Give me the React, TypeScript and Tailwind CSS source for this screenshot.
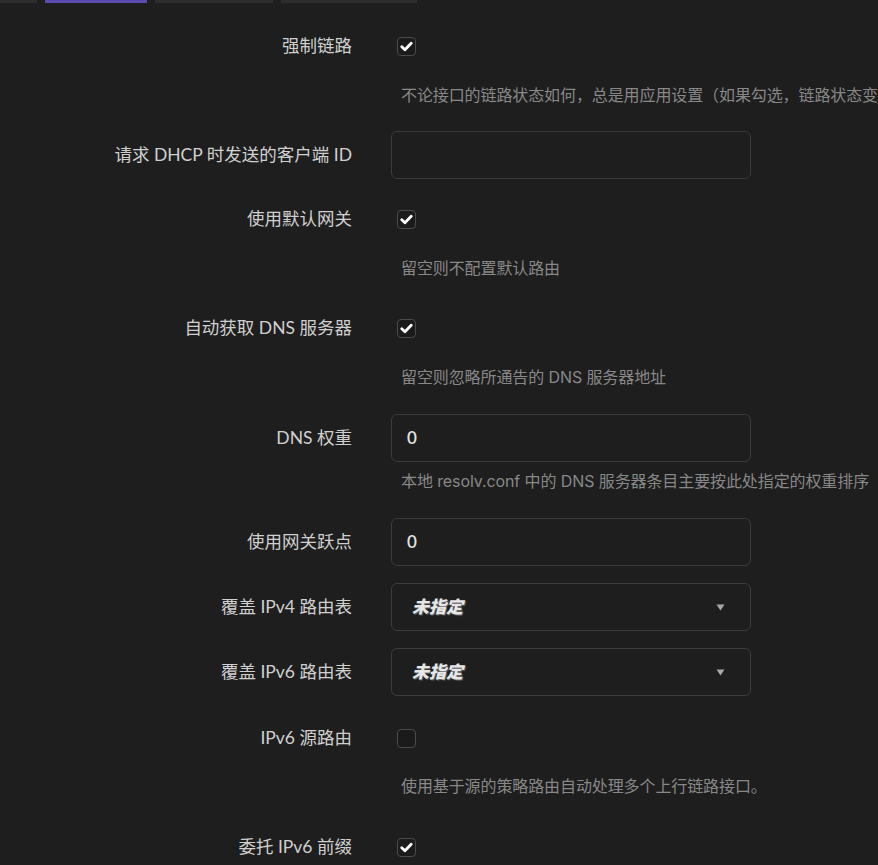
import React from "react";

const FONT = { fontFamily: '"Lato", "Noto Sans CJK SC", "Noto Sans", sans-serif' };
const DESC_FONT = { fontFamily: '"Inter", "Noto Sans CJK SC", "Noto Sans", sans-serif' };

function Check({ checked }: { checked: boolean }) {
  return (
    <div className="ml-[6px] flex h-[19px] w-[19px] items-center justify-center rounded-[4px] border border-[#4a4a4a] bg-[#1b1b1b]">
      {checked && (
        <svg width="13" height="11" viewBox="0 0 13 11">
          <path d="M1.8 5.8 L4.9 8.8 L11.2 2.2" fill="none" stroke="#ffffff" strokeWidth="2.8" strokeLinecap="round" strokeLinejoin="round" />
        </svg>
      )}
    </div>
  );
}

function Label({ children }: { children: React.ReactNode }) {
  return (
    <div className="w-[352px] shrink-0 text-right text-[17.5px] leading-[24px] text-[#d0d0d0] whitespace-nowrap">
      {children}
    </div>
  );
}

function Row({
  label,
  children,
  className,
}: {
  label: string;
  children: React.ReactNode;
  className?: string;
}) {
  return (
    <div className={"flex h-[48px] items-center " + (className ?? "")}>
      <Label>{label}</Label>
      <div className="ml-[39px] flex items-center">{children}</div>
    </div>
  );
}

function Desc({ children, className }: { children: React.ReactNode; className?: string }) {
  return (
    <div
      className={"overflow-hidden pl-[401px] text-[16px] leading-[20px] tracking-[-0.1px] text-[#888888] whitespace-nowrap " + (className ?? "")}
      style={DESC_FONT}
    >
      {children}
    </div>
  );
}

function TextInput({ value }: { value: string }) {
  return (
    <div className="flex h-[48px] w-[360px] items-center rounded-[6px] border border-[#3b3b3b] bg-[#1e1e1e] pl-[15px] text-[17px] font-semibold text-[#e4e4e4]">
      {value}
    </div>
  );
}

function SelectBox() {
  return (
    <div className="flex h-[48px] w-[360px] items-center justify-between rounded-[6px] border border-[#3b3b3b] bg-[#1e1e1e] pl-[20px] pr-[25px]">
      <span
        className="text-[17px] font-black italic text-[#e6e6e6]"
        style={{ textShadow: "1px 1px 1px #666" }}
      >
        未指定
      </span>
      <svg width="9" height="7" viewBox="0 0 9 7">
        <path d="M0.5 0.5 L8.5 0.5 L4.5 6.5 Z" fill="#a8a8a8" />
      </svg>
    </div>
  );
}

export default function App() {
  return (
    <div className="h-[865px] w-[878px] overflow-hidden bg-[#1e1e1e]" style={FONT}>
      <div className="flex h-[3px] gap-[8px]">
        <div className="w-[37px] bg-[#2d2d2d]" />
        <div className="w-[102px] bg-[#5b4bb0]" />
        <div className="w-[118px] bg-[#2d2d2d]" />
        <div className="w-[136px] bg-[#2d2d2d]" />
      </div>
      <div className="pt-[19px]">
        <Row label="强制链路">
          <Check checked />
        </Row>
        <Desc className="mt-[15px] mb-[26px]">
          不论接口的链路状态如何，总是用应用设置（如果勾选，链路状态变更时不再调用热插拔事件处理程序）
        </Desc>

        <Row label="请求 DHCP 时发送的客户端 ID">
          <TextInput value="" />
        </Row>

        <Row label="使用默认网关" className="mt-[16px]">
          <Check checked />
        </Row>
        <Desc className="mt-[15px] mb-[26px]">留空则不配置默认路由</Desc>

        <Row label="自动获取 DNS 服务器">
          <Check checked />
        </Row>
        <Desc className="mt-[15px] mb-[27px]">留空则忽略所通告的 DNS 服务器地址</Desc>

        <Row label="DNS 权重">
          <TextInput value="0" />
        </Row>
        <Desc className="mt-[9px] mb-[27px]">
          本地 resolv.conf 中的 DNS 服务器条目主要按此处指定的权重排序
        </Desc>

        <Row label="使用网关跃点">
          <TextInput value="0" />
        </Row>

        <Row label="覆盖 IPv4 路由表" className="mt-[17px]">
          <SelectBox />
        </Row>

        <Row label="覆盖 IPv6 路由表" className="mt-[17px]">
          <SelectBox />
        </Row>

        <Row label="IPv6 源路由" className="mt-[18px]">
          <Check checked={false} />
        </Row>
        <Desc className="mt-[14px] mb-[27px]">使用基于源的策略路由自动处理多个上行链路接口。</Desc>

        <Row label="委托 IPv6 前缀">
          <Check checked />
        </Row>
      </div>
    </div>
  );
}
